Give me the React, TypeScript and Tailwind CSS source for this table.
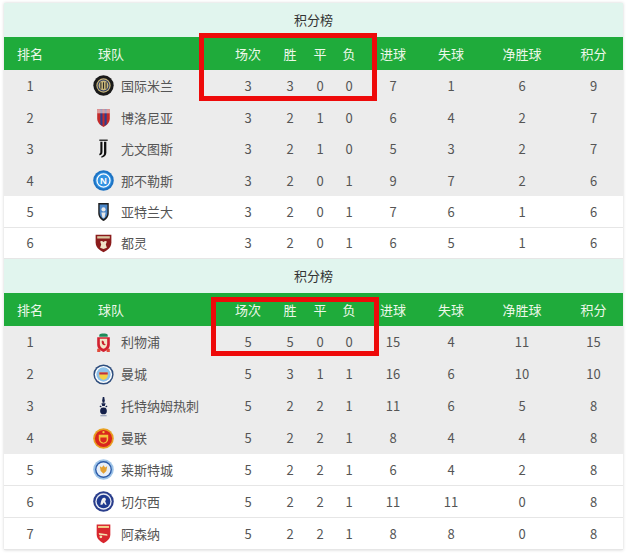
import React from "react";

type Row = { rank: number; name: string; logo: string; p: number; w: number; d: number; l: number; gf: number; ga: number; gd: number; pts: number };

const serieA: Row[] = [
  { rank: 1, name: "国际米兰", logo: "inter", p: 3, w: 3, d: 0, l: 0, gf: 7, ga: 1, gd: 6, pts: 9 },
  { rank: 2, name: "博洛尼亚", logo: "bologna", p: 3, w: 2, d: 1, l: 0, gf: 6, ga: 4, gd: 2, pts: 7 },
  { rank: 3, name: "尤文图斯", logo: "juve", p: 3, w: 2, d: 1, l: 0, gf: 5, ga: 3, gd: 2, pts: 7 },
  { rank: 4, name: "那不勒斯", logo: "napoli", p: 3, w: 2, d: 0, l: 1, gf: 9, ga: 7, gd: 2, pts: 6 },
  { rank: 5, name: "亚特兰大", logo: "atalanta", p: 3, w: 2, d: 0, l: 1, gf: 7, ga: 6, gd: 1, pts: 6 },
  { rank: 6, name: "都灵", logo: "torino", p: 3, w: 2, d: 0, l: 1, gf: 6, ga: 5, gd: 1, pts: 6 },
];

const epl: Row[] = [
  { rank: 1, name: "利物浦", logo: "liverpool", p: 5, w: 5, d: 0, l: 0, gf: 15, ga: 4, gd: 11, pts: 15 },
  { rank: 2, name: "曼城", logo: "city", p: 5, w: 3, d: 1, l: 1, gf: 16, ga: 6, gd: 10, pts: 10 },
  { rank: 3, name: "托特纳姆热刺", logo: "spurs", p: 5, w: 2, d: 2, l: 1, gf: 11, ga: 6, gd: 5, pts: 8 },
  { rank: 4, name: "曼联", logo: "united", p: 5, w: 2, d: 2, l: 1, gf: 8, ga: 4, gd: 4, pts: 8 },
  { rank: 5, name: "莱斯特城", logo: "leicester", p: 5, w: 2, d: 2, l: 1, gf: 6, ga: 4, gd: 2, pts: 8 },
  { rank: 6, name: "切尔西", logo: "chelsea", p: 5, w: 2, d: 2, l: 1, gf: 11, ga: 11, gd: 0, pts: 8 },
  { rank: 7, name: "阿森纳", logo: "arsenal", p: 5, w: 2, d: 2, l: 1, gf: 8, ga: 8, gd: 0, pts: 8 },
];

function Logo({ kind }: { kind: string }) {
  const s = { width: 21, height: 21, className: "shrink-0 block" };
  switch (kind) {
    case "inter":
      return (
        <svg {...s} viewBox="0 0 20 20">
          <circle cx="10" cy="10" r="9.7" fill="#1a1a1a" />
          <circle cx="10" cy="10" r="6.8" fill="#c9b77a" />
          <circle cx="10" cy="10" r="5.2" fill="none" stroke="#2a3a6a" strokeWidth="1" />
          <path d="M7.5 7v6M10 7v6M12.5 7v6" stroke="#2a2a2a" strokeWidth="1" />
        </svg>
      );
    case "bologna":
      return (
        <svg {...s} viewBox="0 0 20 20">
          <path d="M4 2h12v9c0 4-3 6.5-6 8-3-1.5-6-4-6-8z" fill="#c42a2a" />
          <path d="M7 2h2v16l-2-1.5zM11 2h2v14.5l-2 1.5z" fill="#2b3f8f" />
          <path d="M4 2h12v4H4z" fill="#f2e9e9" opacity="0.6" />
        </svg>
      );
    case "juve":
      return (
        <svg {...s} viewBox="0 0 20 20">
          <path d="M6 1.5h8v1.2H6z" fill="#111" />
          <path d="M7 3.6h2v9.4c0 2-1 3-3 3.5V15c.8-.3 1-1 1-2z" fill="#111" />
          <path d="M10.5 3.6h2.2v10.4c0 2.6-1.8 4.2-4.7 4.8v-1.5c1.8-.4 2.5-1.5 2.5-3.1z" fill="#111" />
        </svg>
      );
    case "napoli":
      return (
        <svg {...s} viewBox="0 0 20 20">
          <circle cx="10" cy="10" r="9.8" fill="#1d73c4" />
          <circle cx="10" cy="10" r="7.8" fill="#3393e2" />
          <circle cx="10" cy="10" r="6.2" fill="none" stroke="#fff" strokeWidth="1.2" />
          <text x="10" y="13.3" textAnchor="middle" fontSize="9" fontWeight="700" fill="#fff" fontFamily="Liberation Sans, sans-serif">N</text>
        </svg>
      );
    case "atalanta":
      return (
        <svg {...s} viewBox="0 0 20 20">
          <path d="M5 2h10v9.5c0 4-2.5 6.5-5 7.5-2.5-1-5-3.5-5-7.5z" fill="#1d1d1d" />
          <path d="M6.3 3.3h7.4v8c0 3-1.8 5-3.7 6-1.9-1-3.7-3-3.7-6z" fill="#4a86c8" />
          <circle cx="10" cy="8" r="2" fill="#e8e8e8" />
          <path d="M8 11h4l-1 5H9z" fill="#e8e8e8" />
        </svg>
      );
    case "torino":
      return (
        <svg {...s} viewBox="0 0 20 20">
          <path d="M2.5 2.5h15v7.5c0 5-4.3 7.8-7.5 9.3-3.2-1.5-7.5-4.3-7.5-9.3z" fill="#8b1c1c" />
          <path d="M4 4h12v2.2H4z" fill="#d9c7a0" />
          <path d="M6.8 9c1-1 2.2-.5 3.2.5 1-1 2.2-1.5 3.2-.5l-1 3 1 3-3.2 1.2-3.2-1.2 1-3z" fill="#f0e3c8" />
        </svg>
      );
    case "liverpool":
      return (
        <svg {...s} viewBox="0 0 20 20">
          <path d="M6 2.5c1-.8 2-1 4-1s3 .2 4 1v2H6z" fill="#1d8c5a" />
          <path d="M4 5h12v7c0 4-3 6-6 7-3-1-6-3-6-7z" fill="#d22030" />
          <path d="M6.5 6.5h7v5c0 2.5-2 4-3.5 4.5-1.5-.5-3.5-2-3.5-4.5z" fill="#f2e6c8" />
          <path d="M8.5 8c1 0 2 .8 2 2s1 2 2 2.2c-1 .7-2.5.6-3.3-.3C8.4 11 8 9.2 8.5 8z" fill="#c8202c" />
          <path d="M4 16h3v3H4zM13 16h3v3h-3z" fill="#e04a3a" />
        </svg>
      );
    case "city":
      return (
        <svg {...s} viewBox="0 0 20 20">
          <circle cx="10" cy="10" r="9.6" fill="#2d4d7d" />
          <circle cx="10" cy="10" r="8.2" fill="#ffffff" />
          <circle cx="10" cy="10" r="6.8" fill="#8dc0e8" />
          <path d="M6 8h8v3c0 2.5-2 3.6-4 4.2-2-.6-4-1.7-4-4.2z" fill="#f4d046" />
          <path d="M6 8h8v2H6z" fill="#c03040" />
        </svg>
      );
    case "spurs":
      return (
        <svg {...s} viewBox="0 0 20 20">
          <path d="M9.3 1h1.4l.5 3-.3 2.5h-1.8L8.8 4z" fill="#14204a" />
          <path d="M8 6.8h4l-.8 2.7H8.8z" fill="#14204a" />
          <path d="M6.5 9.5l1.5 1M13.5 9.5l-1.5 1" stroke="#14204a" strokeWidth="1" />
          <circle cx="10" cy="14.2" r="3.2" fill="#14204a" />
          <path d="M7 18.8h6" stroke="#8a94b0" strokeWidth="1" />
        </svg>
      );
    case "united":
      return (
        <svg {...s} viewBox="0 0 20 20">
          <circle cx="10" cy="10" r="9.8" fill="#e8a020" />
          <circle cx="10" cy="10" r="8.2" fill="#d9261c" />
          <path d="M5.5 6.5h9v4c0 2.5-2 4-4.5 4.5-2.5-.5-4.5-2-4.5-4.5z" fill="#f5c23c" />
          <path d="M7 9h6v2.5c0 1.3-1.4 2.2-3 2.5-1.6-.3-3-1.2-3-2.5z" fill="#d9261c" />
          <circle cx="10" cy="4" r="1.1" fill="#f5c23c" />
        </svg>
      );
    case "leicester":
      return (
        <svg {...s} viewBox="0 0 20 20">
          <circle cx="10" cy="10" r="9.8" fill="#9ec4e8" />
          <circle cx="10" cy="10" r="8" fill="#2a5aa8" />
          <circle cx="10" cy="10" r="6.7" fill="#e6eef8" />
          <path d="M6.5 7l2 1 1.5-2 1.5 2 2-1-.8 4.5L10 14l-2.7-2.5z" fill="#e2a032" />
        </svg>
      );
    case "chelsea":
      return (
        <svg {...s} viewBox="0 0 20 20">
          <circle cx="10" cy="10" r="9.8" fill="#2a3e8c" />
          <circle cx="10" cy="10" r="7.8" fill="#e8ebf4" />
          <circle cx="10" cy="10" r="6.5" fill="#1f3a8f" />
          <path d="M7 13c.5-2.5 1-4 1.6-5.3.8-1.3 2.2-1.6 3.2-.8.9.8.6 2-.3 2.6l1.5 3.5h-1.5L10.2 11l-1.3 2z" fill="#f0f0f0" />
        </svg>
      );
    case "arsenal":
      return (
        <svg {...s} viewBox="0 0 20 20">
          <path d="M3.5 1.5h13v9.5c0 4-3.2 6.7-6.5 8.3-3.3-1.6-6.5-4.3-6.5-8.3z" fill="#d8262e" />
          <path d="M4.8 2.8h10.4v1.9H4.8z" fill="#f3d28a" />
          <path d="M5.5 9.5l8 1.2.3 1.4-8-.8z" fill="#f4e0b0" />
          <circle cx="7.5" cy="13.2" r="1.3" fill="#f4e0b0" />
        </svg>
      );
  }
  return null;
}

const cols = ["w-[52px]", "w-[166px]", "w-[52px]", "w-[32px]", "w-[28px]", "w-[30px]", "w-[58px]", "w-[58px]", "w-[84px]", "w-[59px]"];
const heads = ["排名", "球队", "场次", "胜", "平", "负", "进球", "失球", "净胜球", "积分"];

function Table({ rows, rowH }: { rows: Row[]; rowH: string }) {
  return (
    <div>
      <div className="h-[34px] bg-[#e1f5ee] flex items-center justify-center text-[13px] text-[#333]">积分榜</div>
      <div className="h-[33px] bg-[#1fab3b] flex items-center text-[13px] text-[#eef8ea]">
        {heads.map((h, i) =>
          i === 1 ? (
            <div key={h} className={`${cols[i]} shrink-0 pl-[42px]`}>{h}</div>
          ) : (
            <div key={h} className={`${cols[i]} shrink-0 text-center`}>{h}</div>
          )
        )}
      </div>
      {rows.map((r) => {
        const gray = r.rank <= 4;
        const vals = [r.p, r.w, r.d, r.l, r.gf, r.ga, r.gd, r.pts];
        return (
          <div
            key={r.rank}
            className={`${rowH} flex items-center text-[13px] text-[#555] ${gray ? "bg-[#ececec]" : "bg-white border-b border-[#e6e6e6]"}`}
          >
            <div className={`${cols[0]} shrink-0 text-center`}>{r.rank}</div>
            <div className={`${cols[1]} shrink-0 pl-[37px] flex items-center gap-[7px]`}>
              <Logo kind={r.logo} />
              <span>{r.name}</span>
            </div>
            {vals.map((v, i) => (
              <div key={i} className={`${cols[i + 2]} shrink-0 text-center`}>{v}</div>
            ))}
          </div>
        );
      })}
    </div>
  );
}

export default function App() {
  return (
    <div className="w-[627px] h-[554px] bg-white pt-[3px] pl-[4px]" style={{ fontFamily: '"Noto Sans CJK SC", "Noto Sans", sans-serif' }}>
      <div className="relative w-[619px] shadow-[0_0_3px_rgba(0,0,0,0.18)]">
        <Table rows={serieA} rowH="h-[31.5px]" />
        <Table rows={epl} rowH="h-[32px]" />
        <div className="absolute left-[195px] top-[30px] w-[178px] h-[68px] border-[5px] border-[#ee0a0a]" />
        <div className="absolute left-[207px] top-[294px] w-[168px] h-[59px] border-[5px] border-[#ee0a0a]" />
      </div>
    </div>
  );
}
